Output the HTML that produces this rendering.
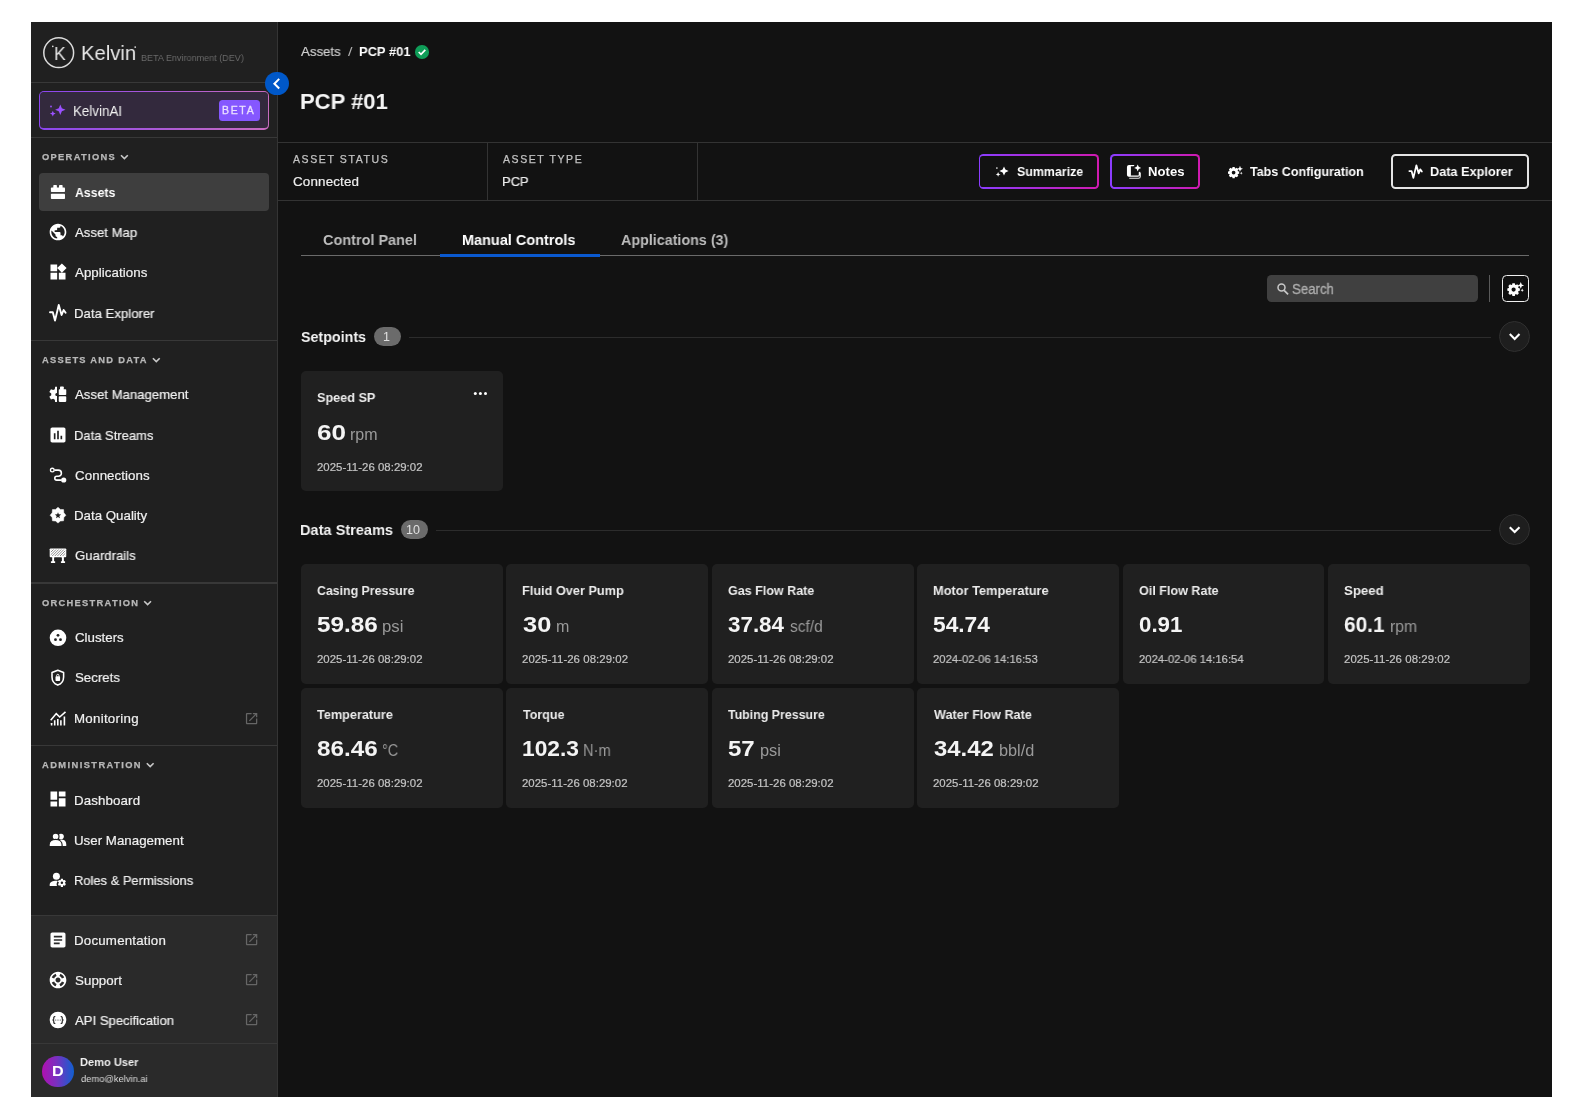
<!DOCTYPE html>
<html lang="en">
<head>
<meta charset="utf-8">
<title>Kelvin - PCP #01</title>
<style>
html,body{margin:0;padding:0;background:#fff;}
body{width:1584px;height:1120px;overflow:hidden;position:relative;font-family:"Liberation Sans",Arial,sans-serif;}
#app{position:absolute;left:0;top:0;width:1584px;height:1120px;}
.b{position:absolute;display:block;}
.t{will-change:transform;position:absolute;display:block;margin:0;padding:0;line-height:1;white-space:pre;font-weight:400;}
h1.t,h2.t,h3.t{font-weight:700;}
</style>
</head>
<body>
<div id="app">
<div class="b" style="left:31.00px;top:22.00px;width:1521.00px;height:1075.00px;background:#121212;"></div>
<nav>
<div class="b" style="left:31.00px;top:22.00px;width:246.00px;height:1075.00px;background:#202020;"></div>
<div class="b" style="left:31.00px;top:915.30px;width:246.00px;height:181.70px;background:#2a2a2a;"></div>
<div class="b" style="left:277.00px;top:22.00px;width:1.20px;height:1075.00px;background:#343434;"></div>
<div class="b" style="left:31.00px;top:82.10px;width:246.00px;height:1.40px;background:#383838;"></div>
<div class="b" style="left:31.00px;top:136.80px;width:246.00px;height:1.40px;background:#383838;"></div>
<div class="b" style="left:31.00px;top:339.60px;width:246.00px;height:1.40px;background:#383838;"></div>
<div class="b" style="left:31.00px;top:582.40px;width:246.00px;height:1.40px;background:#383838;"></div>
<div class="b" style="left:31.00px;top:744.60px;width:246.00px;height:1.40px;background:#383838;"></div>
<div class="b" style="left:31.00px;top:915.10px;width:246.00px;height:1.40px;background:#383838;"></div>
<div class="b" style="left:31.00px;top:1042.80px;width:246.00px;height:1.40px;background:#383838;"></div>
<span class="t" style="left:53.99px;top:44.20px;font-size:19px;color:#e4e4e4;transform:scaleX(0.9256);transform-origin:0 0;">K</span>
<span class="t" style="left:80.78px;top:42.20px;font-size:21px;color:#e8e8e8;transform:scaleX(0.9653);transform-origin:0 0;">Kelvin</span>
<span class="t" style="left:140.78px;top:52.95px;font-size:9.5px;color:#6a6a6a;transform:scaleX(0.9510);transform-origin:0 0;">BETA Environment (DEV)</span>
<div class="b" style="left:38.50px;top:91.00px;width:230.80px;height:38.80px;border-radius:5px;background:linear-gradient(90deg,#8b45f0,#c86cc0);"></div>
<div class="b" style="left:39.90px;top:92.40px;width:228.00px;height:36.00px;background:#33293d;border-radius:3.500px;"></div>
<span class="t" style="left:73.33px;top:104.00px;font-size:14.4px;color:#f2f2f2;transform:scaleX(0.9286);transform-origin:0 0;">KelvinAI</span>
<div class="b" style="left:219.00px;top:99.80px;width:40.60px;height:21.10px;background:#8557ff;border-radius:3.500px;"></div>
<span class="t" style="left:222.36px;top:104.95px;font-size:10.5px;color:#eadfff;letter-spacing:1.674px;-webkit-text-stroke:0.300px #eadfff;">BETA</span>
<div class="b" style="left:265.30px;top:72.00px;width:23.40px;height:23.40px;background:#0058c9;border-radius:50%;"></div>
<span class="t" style="left:42.13px;top:152.55px;font-size:9.3px;color:#b8b8b8;font-weight:700;letter-spacing:1.325px;-webkit-text-stroke:0.250px #b8b8b8;">OPERATIONS</span>
<span class="t" style="left:42.27px;top:355.55px;font-size:9.3px;color:#b8b8b8;font-weight:700;letter-spacing:1.271px;-webkit-text-stroke:0.250px #b8b8b8;">ASSETS AND DATA</span>
<span class="t" style="left:42.13px;top:598.55px;font-size:9.3px;color:#b8b8b8;font-weight:700;letter-spacing:1.306px;-webkit-text-stroke:0.250px #b8b8b8;">ORCHESTRATION</span>
<span class="t" style="left:42.27px;top:760.55px;font-size:9.3px;color:#b8b8b8;font-weight:700;letter-spacing:1.435px;-webkit-text-stroke:0.250px #b8b8b8;">ADMINISTRATION</span>
<div class="b" style="left:38.70px;top:172.80px;width:230.60px;height:38.20px;background:#3e3e3e;border-radius:4px;"></div>
<span class="t" style="left:75.09px;top:185.75px;font-size:13.3px;color:#fff;font-weight:700;transform:scaleX(0.9247);transform-origin:0 0;">Assets</span>
<svg class="b" style="left:47.80px;top:222.00px;" width="20" height="20" viewBox="0 0 24 24"><g fill="#fff"><path d="M12 2C6.48 2 2 6.48 2 12s4.48 10 10 10 10-4.48 10-10S17.52 2 12 2zm-1 17.93c-3.95-.49-7-3.85-7-7.93 0-.62.08-1.21.21-1.79L9 15v1c0 1.1.9 2 2 2v1.93zm6.9-2.54c-.26-.81-1-1.39-1.9-1.39h-1v-3c0-.55-.45-1-1-1H8v-2h2c.55 0 1-.45 1-1V7h2c1.1 0 2-.9 2-2v-.41c2.93 1.19 5 4.06 5 7.41 0 2.08-.8 3.97-2.1 5.39z"/></g></svg>
<span class="t" style="left:75.40px;top:226.05px;font-size:13.3px;color:#f0f0f0;-webkit-text-stroke:0.200px #f0f0f0;transform:scaleX(0.9886);transform-origin:0 0;">Asset Map</span>
<svg class="b" style="left:47.80px;top:262.20px;" width="20" height="20" viewBox="0 0 24 24"><g fill="#fff"><path d="M13 13v8h8v-8h-8zM3 21h8v-8H3v8zM3 3v8h8V3H3zm13.66-1.31L11 7.34 16.66 13l5.66-5.66-5.66-5.65z"/></g></svg>
<span class="t" style="left:75.40px;top:266.35px;font-size:13.3px;color:#f0f0f0;letter-spacing:0.053px;-webkit-text-stroke:0.200px #f0f0f0;">Applications</span>
<span class="t" style="left:74.34px;top:306.65px;font-size:13.3px;color:#f0f0f0;-webkit-text-stroke:0.200px #f0f0f0;transform:scaleX(0.9917);transform-origin:0 0;">Data Explorer</span>
<span class="t" style="left:75.40px;top:388.25px;font-size:13.3px;color:#f0f0f0;-webkit-text-stroke:0.200px #f0f0f0;transform:scaleX(0.9906);transform-origin:0 0;">Asset Management</span>
<svg class="b" style="left:47.80px;top:424.80px;" width="20" height="20" viewBox="0 0 24 24"><g fill="#fff"><path d="M19 3H5c-1.1 0-2 .9-2 2v14c0 1.1.9 2 2 2h14c1.1 0 2-.9 2-2V5c0-1.1-.9-2-2-2zM9 17H7v-7h2v7zm4 0h-2V7h2v10zm4 0h-2v-4h2v4z"/></g></svg>
<span class="t" style="left:74.36px;top:428.55px;font-size:13.3px;color:#f0f0f0;-webkit-text-stroke:0.200px #f0f0f0;transform:scaleX(0.9762);transform-origin:0 0;">Data Streams</span>
<span class="t" style="left:74.73px;top:468.85px;font-size:13.3px;color:#f0f0f0;letter-spacing:0.078px;-webkit-text-stroke:0.200px #f0f0f0;">Connections</span>
<span class="t" style="left:74.34px;top:509.15px;font-size:13.3px;color:#f0f0f0;-webkit-text-stroke:0.200px #f0f0f0;transform:scaleX(0.9951);transform-origin:0 0;">Data Quality</span>
<span class="t" style="left:74.74px;top:549.45px;font-size:13.3px;color:#f0f0f0;-webkit-text-stroke:0.200px #f0f0f0;transform:scaleX(0.9892);transform-origin:0 0;">Guardrails</span>
<span class="t" style="left:74.74px;top:630.85px;font-size:13.3px;color:#f0f0f0;-webkit-text-stroke:0.200px #f0f0f0;transform:scaleX(0.9983);transform-origin:0 0;">Clusters</span>
<span class="t" style="left:74.80px;top:671.15px;font-size:13.3px;color:#f0f0f0;-webkit-text-stroke:0.200px #f0f0f0;transform:scaleX(0.9949);transform-origin:0 0;">Secrets</span>
<span class="t" style="left:74.34px;top:711.55px;font-size:13.3px;color:#f0f0f0;letter-spacing:0.272px;-webkit-text-stroke:0.200px #f0f0f0;">Monitoring</span>
<svg class="b" style="left:244.30px;top:710.80px;" width="15.2" height="15.2" viewBox="0 0 24 24"><g fill="#666"><path d="M19 19H5V5h7V3H5c-1.11 0-2 .9-2 2v14c0 1.1.89 2 2 2h14c1.1 0 2-.9 2-2v-7h-2v7zM14 3v2h3.59l-9.83 9.830 1.41 1.41L19 6.41V10h2V3h-7z"/></g></svg>
<svg class="b" style="left:47.80px;top:789.40px;" width="20" height="20" viewBox="0 0 24 24"><g fill="#fff"><path d="M3 13h8V3H3v10zm0 8h8v-6H3v6zm10 0h8V11h-8v10zm0-18v6h8V3h-8z"/></g></svg>
<span class="t" style="left:74.34px;top:793.55px;font-size:13.3px;color:#f0f0f0;letter-spacing:0.128px;-webkit-text-stroke:0.200px #f0f0f0;">Dashboard</span>
<span class="t" style="left:74.40px;top:833.85px;font-size:13.3px;color:#f0f0f0;letter-spacing:0.015px;-webkit-text-stroke:0.200px #f0f0f0;">User Management</span>
<span class="t" style="left:74.37px;top:874.05px;font-size:13.3px;color:#f0f0f0;-webkit-text-stroke:0.200px #f0f0f0;transform:scaleX(0.9722);transform-origin:0 0;">Roles &amp; Permissions</span>
<svg class="b" style="left:47.80px;top:929.50px;" width="20" height="20" viewBox="0 0 24 24"><g fill="#fff"><path d="M19 3H5c-1.1 0-2 .9-2 2v14c0 1.1.9 2 2 2h14c1.1 0 2-.9 2-2V5c0-1.1-.9-2-2-2zm-5 14H7v-2h7v2zm3-4H7v-2h10v2zm0-4H7V7h10v2z"/></g></svg>
<span class="t" style="left:74.34px;top:933.55px;font-size:13.3px;color:#f0f0f0;letter-spacing:0.202px;-webkit-text-stroke:0.200px #f0f0f0;">Documentation</span>
<svg class="b" style="left:244.30px;top:932.00px;" width="15.2" height="15.2" viewBox="0 0 24 24"><g fill="#666"><path d="M19 19H5V5h7V3H5c-1.11 0-2 .9-2 2v14c0 1.1.89 2 2 2h14c1.1 0 2-.9 2-2v-7h-2v7zM14 3v2h3.59l-9.83 9.830 1.41 1.41L19 6.41V10h2V3h-7z"/></g></svg>
<svg class="b" style="left:47.80px;top:969.80px;" width="20" height="20" viewBox="0 0 24 24"><g fill="#fff"><path d="M12 2C6.48 2 2 6.48 2 12s4.48 10 10 10 10-4.48 10-10S17.52 2 12 2zm7.46 7.12l-2.78 1.15c-.51-1.36-1.58-2.44-2.95-2.94l1.15-2.78c2.1.8 3.77 2.47 4.58 4.57zM12 15c-1.66 0-3-1.34-3-3s1.34-3 3-3 3 1.34 3 3-1.34 3-3 3zM9.13 4.54l1.17 2.78c-1.38.5-2.47 1.59-2.98 2.97L4.54 9.13c.81-2.11 2.48-3.78 4.59-4.59zM4.54 14.87l2.78-1.15c.51 1.38 1.59 2.46 2.97 2.960l-1.17 2.78c-2.1-.81-3.77-2.48-4.58-4.59zm10.34 4.59l-1.15-2.78c1.37-.51 2.45-1.59 2.95-2.97l2.78 1.17c-.81 2.1-2.48 3.77-4.58 4.58z"/></g></svg>
<span class="t" style="left:74.80px;top:973.85px;font-size:13.3px;color:#f0f0f0;letter-spacing:0.058px;-webkit-text-stroke:0.200px #f0f0f0;">Support</span>
<svg class="b" style="left:244.30px;top:972.30px;" width="15.2" height="15.2" viewBox="0 0 24 24"><g fill="#666"><path d="M19 19H5V5h7V3H5c-1.11 0-2 .9-2 2v14c0 1.1.89 2 2 2h14c1.1 0 2-.9 2-2v-7h-2v7zM14 3v2h3.59l-9.83 9.830 1.41 1.41L19 6.41V10h2V3h-7z"/></g></svg>
<svg class="b" style="left:47.80px;top:1009.80px;" width="20" height="20" viewBox="0 0 24 24"><g fill="#fff"><path d="M12 2a10 10 0 1 0 0 20 10 10 0 0 0 0-20zM8.800 7.200v1.300c-.8 0-1.200.3-1.200 1v1.300c0 .6-.3 1-.8 1.200.5.200.8.600.8 1.200v1.300c0 .7.400 1 1.200 1v1.300c-1.700 0-2.600-.7-2.600-2.200v-1.200c0-.6-.3-.9-.9-.9v-1.000c.6 0 .9-.3.9-.9V9.400c0-1.500.9-2.200 2.600-2.200zm6.400 0c1.700 0 2.600.7 2.600 2.200v1.200c0 .6.300.9.900.9v1.000c-.6 0-.9.300-.9.900v1.200c0 1.500-.9 2.200-2.600 2.200v-1.300c.8 0 1.200-.3 1.200-1v-1.300c0-.6.300-1 .8-1.200-.5-.2-.8-.600-.8-1.200V9.500c0-.7-.4-1-1.200-1zM9.300 11.300a.7.7 0 1 1 0 1.400.7.7 0 0 1 0-1.400zm2.700 0a.7.7 0 1 1 0 1.400.7.7 0 0 1 0-1.400zm2.700 0a.7.7 0 1 1 0 1.400.7.7 0 0 1 0-1.400z" fill-rule="evenodd"/></g></svg>
<span class="t" style="left:75.40px;top:1014.05px;font-size:13.3px;color:#f0f0f0;-webkit-text-stroke:0.200px #f0f0f0;transform:scaleX(0.9855);transform-origin:0 0;">API Specification</span>
<svg class="b" style="left:244.30px;top:1012.30px;" width="15.2" height="15.2" viewBox="0 0 24 24"><g fill="#666"><path d="M19 19H5V5h7V3H5c-1.11 0-2 .9-2 2v14c0 1.1.89 2 2 2h14c1.1 0 2-.9 2-2v-7h-2v7zM14 3v2h3.59l-9.83 9.830 1.41 1.41L19 6.41V10h2V3h-7z"/></g></svg>
<div class="b" style="left:42.00px;top:1055.60px;width:31.50px;height:31.40px;border-radius:50%;background:linear-gradient(90deg,#b010b0 0%,#7a30c0 45%,#1060d0 100%);"></div>
<span class="t" style="left:51.85px;top:1064.20px;font-size:14px;color:#fff;font-weight:700;transform:scaleX(1.1521);transform-origin:0 0;">D</span>
<span class="t" style="left:80.28px;top:1056.60px;font-size:11.2px;color:#f0f0f0;font-weight:700;transform:scaleX(0.9890);transform-origin:0 0;">Demo User</span>
<span class="t" style="left:80.63px;top:1073.90px;font-size:9.6px;color:#ddd;transform:scaleX(0.9734);transform-origin:0 0;">demo@kelvin.ai</span>
</nav>
<main>
<span class="t" style="left:300.60px;top:45.00px;font-size:13.4px;color:#d0d0d0;-webkit-text-stroke:0.200px #d0d0d0;transform:scaleX(0.9866);transform-origin:0 0;">Assets</span>
<span class="t" style="left:347.50px;top:45.20px;font-size:13px;color:#b0b0b0;transform:scaleX(1.2363);transform-origin:0 0;">/</span>
<span class="t" style="left:358.76px;top:45.00px;font-size:13.4px;color:#fff;font-weight:700;transform:scaleX(0.9656);transform-origin:0 0;">PCP #01</span>
<div class="b" style="left:415.10px;top:45.00px;width:13.60px;height:13.60px;background:#0f9d58;border-radius:50%;"></div>
<h1 class="t" style="left:300.07px;top:90.55px;font-size:22.3px;color:#f4f4f4;font-weight:700;transform:scaleX(0.9878);transform-origin:0 0;">PCP #01</h1>
<div class="b" style="left:278.00px;top:141.70px;width:1274.00px;height:1.20px;background:#333;"></div>
<div class="b" style="left:278.00px;top:199.50px;width:1274.00px;height:1.00px;background:#333;"></div>
<div class="b" style="left:487.00px;top:142.50px;width:1.20px;height:57.30px;background:#333;"></div>
<div class="b" style="left:697.20px;top:142.50px;width:1.20px;height:57.30px;background:#333;"></div>
<span class="t" style="left:293.20px;top:153.95px;font-size:10.5px;color:#c2c2c2;letter-spacing:1.609px;-webkit-text-stroke:0.250px #c2c2c2;">ASSET STATUS</span>
<span class="t" style="left:292.83px;top:175.00px;font-size:13.4px;color:#ededed;letter-spacing:0.161px;-webkit-text-stroke:0.200px #ededed;">Connected</span>
<span class="t" style="left:503.20px;top:153.95px;font-size:10.5px;color:#c2c2c2;letter-spacing:1.584px;-webkit-text-stroke:0.250px #c2c2c2;">ASSET TYPE</span>
<span class="t" style="left:502.36px;top:175.00px;font-size:13.4px;color:#ededed;-webkit-text-stroke:0.200px #ededed;transform:scaleX(0.9692);transform-origin:0 0;">PCP</span>
<div class="b" style="left:978.50px;top:154.00px;width:120.30px;height:35.00px;border-radius:4.500px;background:linear-gradient(90deg,#8b3dff,#d01ab0);"></div>
<div class="b" style="left:980.40px;top:155.90px;width:116.50px;height:31.20px;background:#121212;border-radius:2.800px;"></div>
<span class="t" style="left:1017.19px;top:165.15px;font-size:13.1px;color:#fff;font-weight:700;transform:scaleX(0.9484);transform-origin:0 0;">Summarize</span>
<div class="b" style="left:1110.20px;top:154.00px;width:89.60px;height:35.00px;border-radius:4.500px;background:linear-gradient(90deg,#8b3dff,#d01ab0);"></div>
<div class="b" style="left:1112.10px;top:155.90px;width:85.80px;height:31.20px;background:#121212;border-radius:2.800px;"></div>
<span class="t" style="left:1147.95px;top:165.15px;font-size:13.1px;color:#fff;font-weight:700;letter-spacing:0.039px;">Notes</span>
<span class="t" style="left:1250.37px;top:165.15px;font-size:13.1px;color:#fff;font-weight:700;transform:scaleX(0.9555);transform-origin:0 0;">Tabs Configuration</span>
<div class="b" style="left:1391.40px;top:154.20px;width:137.90px;height:34.80px;border-radius:4.500px;border:2px solid #e4e4e4;box-sizing:border-box;"></div>
<span class="t" style="left:1430.17px;top:165.15px;font-size:13.1px;color:#fff;font-weight:700;transform:scaleX(0.9707);transform-origin:0 0;">Data Explorer</span>
<div class="b" style="left:300.60px;top:254.90px;width:1228.80px;height:1.50px;background:#6a6a6a;"></div>
<div class="b" style="left:440.00px;top:254.30px;width:159.50px;height:2.30px;background:#0a59cf;"></div>
<span class="t" style="left:323.42px;top:232.80px;font-size:14.8px;color:#bdbdbd;font-weight:700;transform:scaleX(0.9773);transform-origin:0 0;">Control Panel</span>
<span class="t" style="left:462.26px;top:232.80px;font-size:14.8px;color:#fff;font-weight:700;transform:scaleX(0.9784);transform-origin:0 0;">Manual Controls</span>
<span class="t" style="left:620.84px;top:232.80px;font-size:14.8px;color:#bdbdbd;font-weight:700;transform:scaleX(0.9667);transform-origin:0 0;">Applications (3)</span>
<div class="b" style="left:1266.60px;top:274.80px;width:211.50px;height:27.40px;background:#404040;border-radius:4.500px;"></div>
<span class="t" style="left:1292.41px;top:282.80px;font-size:13.8px;color:#adadad;-webkit-text-stroke:0.300px #adadad;transform:scaleX(0.9567);transform-origin:0 0;">Search</span>
<div class="b" style="left:1489.10px;top:275.20px;width:1.40px;height:27.20px;background:#5a5a5a;"></div>
<div class="b" style="left:1501.60px;top:274.80px;width:27.60px;height:27.60px;background:#101010;border-radius:4.500px;border:1.700px solid #f0f0f0;box-sizing:border-box;"></div>
<h2 class="t" style="left:300.64px;top:329.00px;font-size:15.4px;color:#f2f2f2;font-weight:700;transform:scaleX(0.9274);transform-origin:0 0;">Setpoints</h2>
<div class="b" style="left:373.80px;top:327.20px;width:26.80px;height:19.00px;background:#6b6b6b;border-radius:9.500px;"></div>
<span class="t" style="left:382.79px;top:330.95px;font-size:12.5px;color:#e0e0e0;">1</span>
<div class="b" style="left:408.80px;top:336.60px;width:1082.70px;height:1.10px;background:#2c2c2c;"></div>
<div class="b" style="left:1499.10px;top:321.20px;width:31.00px;height:31.00px;background:#1e1e1e;border-radius:50%;border:1px solid #303030;box-sizing:border-box;"></div>
<h2 class="t" style="left:300.05px;top:522.00px;font-size:15.4px;color:#f2f2f2;font-weight:700;transform:scaleX(0.9456);transform-origin:0 0;">Data Streams</h2>
<div class="b" style="left:400.50px;top:520.30px;width:27.10px;height:19.00px;background:#6b6b6b;border-radius:9.500px;"></div>
<span class="t" style="left:406.16px;top:523.95px;font-size:12.5px;color:#e0e0e0;">10</span>
<div class="b" style="left:435.80px;top:529.70px;width:1055.70px;height:1.10px;background:#2c2c2c;"></div>
<div class="b" style="left:1499.10px;top:514.30px;width:31.00px;height:31.00px;background:#1e1e1e;border-radius:50%;border:1px solid #303030;box-sizing:border-box;"></div>
<div class="b" style="left:301.00px;top:371.40px;width:201.80px;height:119.80px;background:#202020;border-radius:5px;"></div>
<h3 class="t" style="left:317.18px;top:391.00px;font-size:13.4px;color:#ececec;font-weight:700;transform:scaleX(0.9453);transform-origin:0 0;">Speed SP</h3>
<span class="t" style="left:316.99px;top:421.55px;font-size:22.3px;color:#f4f4f4;font-weight:700;transform:scaleX(1.1685);transform-origin:0 0;">60</span>
<span class="t" style="left:350.27px;top:426.70px;font-size:16px;color:#9a9a9a;transform:scaleX(0.9914);transform-origin:0 0;">rpm</span>
<span class="t" style="left:316.93px;top:461.50px;font-size:11.4px;color:#c4c4c4;letter-spacing:0.033px;-webkit-text-stroke:0.200px #c4c4c4;">2025-11-26 08:29:02</span>
<div class="b" style="left:301.00px;top:564.00px;width:201.80px;height:119.80px;background:#202020;border-radius:5px;"></div>
<h3 class="t" style="left:317.01px;top:584.00px;font-size:13.4px;color:#ececec;font-weight:700;transform:scaleX(0.9219);transform-origin:0 0;">Casing Pressure</h3>
<span class="t" style="left:317.17px;top:613.55px;font-size:22.3px;color:#f4f4f4;font-weight:700;transform:scaleX(1.0884);transform-origin:0 0;">59.86</span>
<span class="t" style="left:382.00px;top:618.70px;font-size:16px;color:#9a9a9a;transform:scaleX(1.0435);transform-origin:0 0;">psi</span>
<span class="t" style="left:316.93px;top:653.50px;font-size:11.4px;color:#c4c4c4;letter-spacing:0.033px;-webkit-text-stroke:0.200px #c4c4c4;">2025-11-26 08:29:02</span>
<div class="b" style="left:506.40px;top:564.00px;width:201.80px;height:119.80px;background:#202020;border-radius:5px;"></div>
<h3 class="t" style="left:522.07px;top:584.00px;font-size:13.4px;color:#ececec;font-weight:700;transform:scaleX(0.9500);transform-origin:0 0;">Fluid Over Pump</h3>
<span class="t" style="left:522.79px;top:613.55px;font-size:22.3px;color:#f4f4f4;font-weight:700;transform:scaleX(1.1391);transform-origin:0 0;">30</span>
<span class="t" style="left:556.06px;top:618.70px;font-size:16px;color:#9a9a9a;transform:scaleX(1.0018);transform-origin:0 0;">m</span>
<span class="t" style="left:522.33px;top:653.50px;font-size:11.4px;color:#c4c4c4;letter-spacing:0.060px;-webkit-text-stroke:0.200px #c4c4c4;">2025-11-26 08:29:02</span>
<div class="b" style="left:711.80px;top:564.00px;width:201.80px;height:119.80px;background:#202020;border-radius:5px;"></div>
<h3 class="t" style="left:727.80px;top:584.00px;font-size:13.4px;color:#ececec;font-weight:700;transform:scaleX(0.9356);transform-origin:0 0;">Gas Flow Rate</h3>
<span class="t" style="left:728.25px;top:613.55px;font-size:22.3px;color:#f4f4f4;font-weight:700;transform:scaleX(1.0035);transform-origin:0 0;">37.84</span>
<span class="t" style="left:790.11px;top:618.70px;font-size:16px;color:#9a9a9a;transform:scaleX(0.9660);transform-origin:0 0;">scf/d</span>
<span class="t" style="left:727.73px;top:653.50px;font-size:11.4px;color:#c4c4c4;letter-spacing:0.033px;-webkit-text-stroke:0.200px #c4c4c4;">2025-11-26 08:29:02</span>
<div class="b" style="left:917.20px;top:564.00px;width:201.80px;height:119.80px;background:#202020;border-radius:5px;"></div>
<h3 class="t" style="left:932.87px;top:584.00px;font-size:13.4px;color:#ececec;font-weight:700;transform:scaleX(0.9558);transform-origin:0 0;">Motor Temperature</h3>
<span class="t" style="left:933.42px;top:613.55px;font-size:22.3px;color:#f4f4f4;font-weight:700;transform:scaleX(1.0203);transform-origin:0 0;">54.74</span>
<span class="t" style="left:933.14px;top:653.50px;font-size:11.4px;color:#c4c4c4;-webkit-text-stroke:0.200px #c4c4c4;transform:scaleX(0.9902);transform-origin:0 0;">2024-02-06 14:16:53</span>
<div class="b" style="left:1122.60px;top:564.00px;width:201.80px;height:119.80px;background:#202020;border-radius:5px;"></div>
<h3 class="t" style="left:1138.60px;top:584.00px;font-size:13.4px;color:#ececec;font-weight:700;transform:scaleX(0.9386);transform-origin:0 0;">Oil Flow Rate</h3>
<span class="t" style="left:1138.72px;top:613.55px;font-size:22.3px;color:#f4f4f4;font-weight:700;transform:scaleX(0.9992);transform-origin:0 0;">0.91</span>
<span class="t" style="left:1138.54px;top:653.50px;font-size:11.4px;color:#c4c4c4;-webkit-text-stroke:0.200px #c4c4c4;transform:scaleX(0.9886);transform-origin:0 0;">2024-02-06 14:16:54</span>
<div class="b" style="left:1328.00px;top:564.00px;width:201.80px;height:119.80px;background:#202020;border-radius:5px;"></div>
<h3 class="t" style="left:1344.17px;top:584.00px;font-size:13.4px;color:#ececec;font-weight:700;transform:scaleX(0.9873);transform-origin:0 0;">Speed</h3>
<span class="t" style="left:1344.17px;top:613.55px;font-size:22.3px;color:#f4f4f4;font-weight:700;transform:scaleX(0.9349);transform-origin:0 0;">60.1</span>
<span class="t" style="left:1389.88px;top:618.70px;font-size:16px;color:#9a9a9a;transform:scaleX(0.9796);transform-origin:0 0;">rpm</span>
<span class="t" style="left:1343.93px;top:653.50px;font-size:11.4px;color:#c4c4c4;letter-spacing:0.060px;-webkit-text-stroke:0.200px #c4c4c4;">2025-11-26 08:29:02</span>
<div class="b" style="left:301.00px;top:687.90px;width:201.80px;height:119.80px;background:#202020;border-radius:5px;"></div>
<h3 class="t" style="left:317.37px;top:708.00px;font-size:13.4px;color:#ececec;font-weight:700;transform:scaleX(0.9460);transform-origin:0 0;">Temperature</h3>
<span class="t" style="left:317.17px;top:737.55px;font-size:22.3px;color:#f4f4f4;font-weight:700;transform:scaleX(1.0865);transform-origin:0 0;">86.46</span>
<span class="t" style="left:382.41px;top:742.70px;font-size:16px;color:#9a9a9a;transform:scaleX(0.8981);transform-origin:0 0;">°C</span>
<span class="t" style="left:316.93px;top:777.50px;font-size:11.4px;color:#c4c4c4;letter-spacing:0.033px;-webkit-text-stroke:0.200px #c4c4c4;">2025-11-26 08:29:02</span>
<div class="b" style="left:506.40px;top:687.90px;width:201.80px;height:119.80px;background:#202020;border-radius:5px;"></div>
<h3 class="t" style="left:522.77px;top:708.00px;font-size:13.4px;color:#ececec;font-weight:700;transform:scaleX(0.9343);transform-origin:0 0;">Torque</h3>
<span class="t" style="left:521.93px;top:737.55px;font-size:22.3px;color:#f4f4f4;font-weight:700;transform:scaleX(1.0218);transform-origin:0 0;">102.3</span>
<span class="t" style="left:583.43px;top:742.70px;font-size:16px;color:#9a9a9a;transform:scaleX(0.9133);transform-origin:0 0;">N·m</span>
<span class="t" style="left:522.33px;top:777.50px;font-size:11.4px;color:#c4c4c4;letter-spacing:0.033px;-webkit-text-stroke:0.200px #c4c4c4;">2025-11-26 08:29:02</span>
<div class="b" style="left:711.80px;top:687.90px;width:201.80px;height:119.80px;background:#202020;border-radius:5px;"></div>
<h3 class="t" style="left:728.18px;top:708.00px;font-size:13.4px;color:#ececec;font-weight:700;transform:scaleX(0.9243);transform-origin:0 0;">Tubing Pressure</h3>
<span class="t" style="left:727.98px;top:737.55px;font-size:22.3px;color:#f4f4f4;font-weight:700;transform:scaleX(1.0780);transform-origin:0 0;">57</span>
<span class="t" style="left:759.52px;top:742.70px;font-size:16px;color:#9a9a9a;transform:scaleX(1.0217);transform-origin:0 0;">psi</span>
<span class="t" style="left:727.73px;top:777.50px;font-size:11.4px;color:#c4c4c4;letter-spacing:0.033px;-webkit-text-stroke:0.200px #c4c4c4;">2025-11-26 08:29:02</span>
<div class="b" style="left:917.20px;top:687.90px;width:201.80px;height:119.80px;background:#202020;border-radius:5px;"></div>
<h3 class="t" style="left:933.70px;top:708.00px;font-size:13.4px;color:#ececec;font-weight:700;transform:scaleX(0.9437);transform-origin:0 0;">Water Flow Rate</h3>
<span class="t" style="left:933.62px;top:737.55px;font-size:22.3px;color:#f4f4f4;font-weight:700;transform:scaleX(1.0693);transform-origin:0 0;">34.42</span>
<span class="t" style="left:998.62px;top:742.70px;font-size:16px;color:#9a9a9a;transform:scaleX(1.0177);transform-origin:0 0;">bbl/d</span>
<span class="t" style="left:933.13px;top:777.50px;font-size:11.4px;color:#c4c4c4;letter-spacing:0.033px;-webkit-text-stroke:0.200px #c4c4c4;">2025-11-26 08:29:02</span>
</main>
<svg class="b" style="left:0;top:0;pointer-events:none" width="1584" height="1120" viewBox="0 0 1584 1120"><circle cx="58.700" cy="52.700" r="14.900" fill="none" stroke="#dcdcdc" stroke-width="1.500"/><circle cx="52.800" cy="46.400" r="0.800" fill="#e6e6e6"/><circle cx="135.200" cy="47.100" r="0.900" fill="#d8d8d8"/>
<g fill="#9b51ff"><path d="M60.30 104.60 L61.86 108.24 L65.50 109.80 L61.86 111.36 L60.30 115.00 L58.74 111.36 L55.10 109.80 L58.74 108.24Z"/><path d="M52.80 110.70 L53.67 112.73 L55.70 113.60 L53.67 114.47 L52.80 116.50 L51.93 114.47 L49.90 113.60 L51.93 112.73Z"/><circle cx="51" cy="106.5" r="0.9"/></g>
<path d="M279.200 78.900 L274.400 83.700 L279.200 88.500" fill="none" stroke="#fff" stroke-width="2"/>
<path d="M121.00 155.20 l3.400 3.400 l3.400 -3.400" fill="none" stroke="#c8c8c8" stroke-width="1.600"/>
<path d="M152.90 358.20 l3.400 3.400 l3.400 -3.400" fill="none" stroke="#c8c8c8" stroke-width="1.600"/>
<path d="M144.20 601.20 l3.400 3.400 l3.400 -3.400" fill="none" stroke="#c8c8c8" stroke-width="1.600"/>
<path d="M146.80 763.20 l3.400 3.400 l3.400 -3.400" fill="none" stroke="#c8c8c8" stroke-width="1.600"/>
<g fill="#fff"><rect x="50.90" y="187.60" width="14.10" height="4.40" rx="0.8"/><rect x="53.30" y="185.00" width="3.60" height="4.00" rx="0.7"/><rect x="59.00" y="185.00" width="3.60" height="4.00" rx="0.7"/><rect x="50.90" y="193.70" width="14.10" height="5.30" rx="0.8"/></g>
<polyline points="50.00,312.20 52.80,312.20 55.00,320.60 58.75,305.00 61.60,315.00 63.60,310.00 65.60,312.80" fill="none" stroke="#fff" stroke-width="1.9" stroke-linejoin="round" stroke-linecap="round"/>
<clipPath id="hg"><rect x="48" y="384.0" width="8.900" height="22"/></clipPath><path d="M58.67 389.14 L58.37 386.77 L55.13 386.77 L54.83 389.14 L53.15 390.11 L50.95 389.18 L49.33 391.99 L51.24 393.43 L51.24 395.37 L49.33 396.81 L50.95 399.62 L53.15 398.69 L54.83 399.66 L55.13 402.03 L58.37 402.03 L58.67 399.66 L60.35 398.69 L62.55 399.62 L64.17 396.81 L62.26 395.37 L62.26 393.43 L64.17 391.99 L62.55 389.18 L60.35 390.11ZM55.25 394.40a1.5 1.5 0 1 0 3.0 0a1.5 1.5 0 1 0 -3.0 0Z" fill="#fff" fill-rule="evenodd" clip-path="url(#hg)"/>
<g fill="#fff"><rect x="58.75" y="389.30" width="7.50" height="5.70" rx="0.8"/><rect x="60.00" y="386.60" width="3.75" height="3.40" rx="0.7"/><rect x="58.75" y="396.30" width="7.50" height="5.60" rx="0.8"/></g>
<circle cx="52.300" cy="470.10" r="1.850" fill="none" stroke="#fff" stroke-width="1.300"/><path d="M54.500 470.10 H58.300 a3.100 3.100 0 0 1 0 6.200 H56.700 a1.900 1.900 0 0 0 0 3.800 H61.500" fill="none" stroke="#fff" stroke-width="1.600"/><circle cx="63.700" cy="480.00" r="2.600" fill="#fff"/>
<path d="M58.00 507.30 L55.59 509.38 L52.41 509.61 L52.18 512.79 L50.10 515.20 L52.18 517.61 L52.41 520.79 L55.59 521.02 L58.00 523.10 L60.41 521.02 L63.59 520.79 L63.82 517.61 L65.90 515.20 L63.82 512.79 L63.59 509.61 L60.41 509.38Z" fill="#fff" stroke="#fff" stroke-width="0.500" stroke-linejoin="round"/><path d="M58.00 512.20 L57.18 514.37 L54.86 514.48 L56.67 515.93 L56.06 518.17 L58.00 516.90 L59.94 518.17 L59.33 515.93 L61.14 514.48 L58.82 514.37Z" fill="#202020"/>
<g fill="#fff"><rect x="49.70" y="548.40" width="16.55" height="8.80" rx="0.9"/><rect x="52.20" y="557.00" width="1.90" height="5.80" rx="0.2"/><rect x="61.90" y="557.00" width="2.00" height="5.80" rx="0.2"/><rect x="50.90" y="561.30" width="4.30" height="1.60" rx="0.3"/><rect x="60.90" y="561.30" width="4.20" height="1.60" rx="0.3"/></g><clipPath id="gc"><rect x="50.800" y="549.50" width="14.400" height="6.600"/></clipPath><g clip-path="url(#gc)" stroke="#707070" stroke-width="0.800"><path d="M43.40 557.00 l8 -8"/><path d="M46.00 557.00 l8 -8"/><path d="M48.60 557.00 l8 -8"/><path d="M51.20 557.00 l8 -8"/><path d="M53.80 557.00 l8 -8"/><path d="M56.40 557.00 l8 -8"/><path d="M59.00 557.00 l8 -8"/><path d="M61.60 557.00 l8 -8"/><path d="M64.20 557.00 l8 -8"/><path d="M66.80 557.00 l8 -8"/><path d="M69.40 557.00 l8 -8"/><path d="M72.00 557.00 l8 -8"/></g>
<circle cx="58" cy="637.8" r="8.300" fill="#fff"/><g fill="#202020"><circle cx="58" cy="635.30" r="1.400"/><circle cx="55.500" cy="639.70" r="1.400"/><circle cx="60.500" cy="639.70" r="1.400"/></g>
<path d="M57.800 670.20 L63.600 672.50 V677.00 c0 3.900 -2.500 6.900 -5.800 8.100 c-3.300 -1.200 -5.800 -4.200 -5.800 -8.100 V672.50 Z" fill="none" stroke="#fff" stroke-width="1.550" stroke-linejoin="round"/><rect x="55.50" y="676.30" width="4.60" height="4.70" rx="0.7" fill="#fff"/><path d="M56.650 676.60 v-1.100 a1.150 1.150 0 0 1 2.300 0 v1.100" fill="none" stroke="#fff" stroke-width="0.950"/>
<polyline points="50.700,720.20 56.250,713.60 59.700,717.00 65.500,711.80" fill="none" stroke="#fff" stroke-width="1.600"/><rect x="50.80" y="723.10" width="1.60" height="2.30" rx="0.1" fill="#fff"/><rect x="53.90" y="720.20" width="1.60" height="5.20" rx="0.1" fill="#fff"/><rect x="57.00" y="718.90" width="1.60" height="6.50" rx="0.1" fill="#fff"/><rect x="60.10" y="720.20" width="1.60" height="5.20" rx="0.1" fill="#fff"/><rect x="63.60" y="716.40" width="1.60" height="9.00" rx="0.1" fill="#fff"/>
<g fill="#fff"><circle cx="61" cy="836.60" r="2.800"/><path d="M59 846.00 v-5 c0 -.800 1.800 -1.300 3.400 -1.300 c2.300 0 3.850 1.900 3.850 4.700 v1.600Z"/></g><g fill="#fff" stroke="#202020" stroke-width="1.200"><circle cx="55.600" cy="836.60" r="3.400"/><path d="M49.100 846.60 v-1.800 c0 -3.300 2.900 -5.400 6.500 -5.400 s6.500 2.100 6.500 5.400 v1.800Z"/></g>
<g fill="#fff"><circle cx="56.400" cy="876.30" r="3.500"/><path d="M49.700 886.00 v-1.500 c0 -2.300 3 -3.700 6.700 -3.700 c.500 0 1 0 1.400 .100 c-1.200 1.400 -1.500 3.300 -.800 5.100Z"/><path d="M63.12 880.06 L62.92 878.72 L60.88 878.72 L60.68 880.06 L60.14 880.37 L58.88 879.88 L57.86 881.64 L58.92 882.49 L58.92 883.11 L57.86 883.96 L58.88 885.72 L60.14 885.23 L60.68 885.54 L60.88 886.88 L62.92 886.88 L63.12 885.54 L63.66 885.23 L64.92 885.72 L65.94 883.96 L64.88 883.11 L64.88 882.49 L65.94 881.64 L64.92 879.88 L63.66 880.37ZM60.65 882.80a1.25 1.25 0 1 0 2.5 0a1.25 1.25 0 1 0 -2.5 0Z" fill-rule="evenodd"/></g>
<path d="M418.700 52 l2.300 2.300 l4.300 -4.500" fill="none" stroke="#fff" stroke-width="1.700"/>
<g fill="#fff"><path d="M1004.00 166.40 L1005.38 169.62 L1008.60 171.00 L1005.38 172.38 L1004.00 175.60 L1002.62 172.38 L999.40 171.00 L1002.62 169.62Z"/><path d="M998.10 172.00 L998.82 173.68 L1000.50 174.40 L998.82 175.12 L998.10 176.80 L997.38 175.12 L995.70 174.40 L997.38 173.68Z"/><circle cx="996.9" cy="168.1" r="0.8"/></g>
<g fill="none" stroke="#fff" stroke-width="1.300"><rect x="1127.600" y="165.700" width="11.800" height="10.500" rx="1.500"/><path d="M1129.200 178.300 H1138.400 Q1140.300 178.300 1140.300 176.400 V172.500" stroke-width="1.100" opacity=".9"/></g><rect x="1127.600" y="165.700" width="3.300" height="10.500" rx=".8" fill="#fff"/><circle cx="1137.700" cy="167.900" r="4.300" fill="#121212"/><g fill="#fff"><path d="M1137.70 164.40 L1138.75 166.85 L1141.20 167.90 L1138.75 168.95 L1137.70 171.40 L1136.65 168.95 L1134.20 167.90 L1136.65 166.85Z"/></g>
<g fill="#fff"><path d="M1234.93 168.24 L1234.69 167.00 L1232.51 167.00 L1232.27 168.24 L1231.46 168.57 L1230.41 167.87 L1228.87 169.41 L1229.57 170.46 L1229.24 171.27 L1228.00 171.51 L1228.00 173.69 L1229.24 173.93 L1229.57 174.74 L1228.87 175.79 L1230.41 177.33 L1231.46 176.63 L1232.27 176.96 L1232.51 178.20 L1234.69 178.20 L1234.93 176.96 L1235.74 176.63 L1236.79 177.33 L1238.33 175.79 L1237.63 174.74 L1237.96 173.93 L1239.20 173.69 L1239.20 171.51 L1237.96 171.27 L1237.63 170.46 L1238.33 169.41 L1236.79 167.87 L1235.74 168.57ZM1231.72 172.60a1.8810000000000002 1.8810000000000002 0 1 0 3.7620000000000005 0a1.8810000000000002 1.8810000000000002 0 1 0 -3.7620000000000005 0Z" fill-rule="evenodd"/><path d="M1239.98 165.87 L1240.87 167.95 L1242.95 168.84 L1240.87 169.73 L1239.98 171.80 L1239.09 169.73 L1237.02 168.84 L1239.09 167.95Z"/><path d="M1241.24 171.69 L1241.68 172.73 L1242.72 173.17 L1241.68 173.61 L1241.24 174.65 L1240.79 173.61 L1239.76 173.17 L1240.79 172.73Z"/></g>
<polyline points="1409.36,171.12 1411.60,171.12 1413.36,177.84 1416.36,165.36 1418.64,173.36 1420.24,169.36 1421.84,171.60" fill="none" stroke="#fff" stroke-width="1.8" stroke-linejoin="round" stroke-linecap="round"/>
<circle cx="1281.500" cy="287.600" r="3.500" fill="none" stroke="#c8c8c8" stroke-width="1.500"/><path d="M1284.100 290.300 l4 4" stroke="#c8c8c8" stroke-width="1.700"/>
<g fill="#fff"><path d="M1515.10 284.70 L1514.82 283.32 L1512.38 283.32 L1512.10 284.70 L1511.20 285.08 L1510.02 284.29 L1508.29 286.02 L1509.08 287.20 L1508.70 288.10 L1507.32 288.38 L1507.32 290.82 L1508.70 291.10 L1509.08 292.00 L1508.29 293.18 L1510.02 294.91 L1511.20 294.12 L1512.10 294.50 L1512.38 295.88 L1514.82 295.88 L1515.10 294.50 L1516.00 294.12 L1517.18 294.91 L1518.91 293.18 L1518.12 292.00 L1518.50 291.10 L1519.88 290.82 L1519.88 288.38 L1518.50 288.10 L1518.12 287.20 L1518.91 286.02 L1517.18 284.29 L1516.00 285.08ZM1511.49 289.60a2.112 2.112 0 1 0 4.224 0a2.112 2.112 0 1 0 -4.224 0Z" fill-rule="evenodd"/><path d="M1520.77 282.05 L1521.77 284.38 L1524.10 285.38 L1521.77 286.37 L1520.77 288.70 L1519.77 286.37 L1517.44 285.38 L1519.77 284.38Z"/><path d="M1522.18 288.58 L1522.68 289.74 L1523.84 290.24 L1522.68 290.74 L1522.18 291.90 L1521.68 290.74 L1520.51 290.24 L1521.68 289.74Z"/></g>
<path d="M1509.80 334.10 l4.850 4.850 l4.850 -4.850" fill="none" stroke="#fff" stroke-width="2.100"/>
<path d="M1509.80 527.20 l4.850 4.850 l4.850 -4.850" fill="none" stroke="#fff" stroke-width="2.100"/>
<g fill="#fff"><circle cx="475.30" cy="393.60" r="1.500"/><circle cx="480.40" cy="393.60" r="1.500"/><circle cx="485.50" cy="393.60" r="1.500"/></g></svg>
</div>
</body>
</html>
